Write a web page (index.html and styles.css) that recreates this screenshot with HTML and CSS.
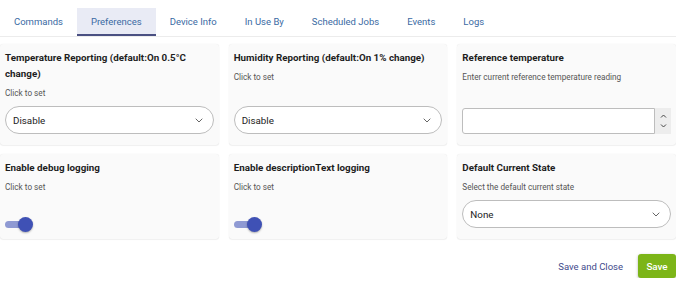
FILE: index.html
```html
<!DOCTYPE html>
<html lang="en">
<head>
  <meta charset="UTF-8" />
  <title>Device Preferences</title>
  <link rel="stylesheet" href="styles.css">
</head>
<body>

  <div class="tabs">
    <div class="tab">Commands</div>
    <div class="tab active">Preferences</div>
    <div class="tab">Device Info</div>
    <div class="tab">In Use By</div>
    <div class="tab">Scheduled Jobs</div>
    <div class="tab">Events</div>
    <div class="tab">Logs</div>
  </div>

  <div class="prefs">
    <div class="card">
      <div class="title">Temperature Reporting (default:On 0.5°C change)</div>
      <div class="desc">Click to set</div>
      <div class="select">
        <span>Disable</span>
        <svg class="chev" width="8" height="5" viewBox="0 0 8 5"><path d="M0.7 0.7l3.3 3.3 3.3-3.3" fill="none" stroke="#666" stroke-width="1"/></svg>
      </div>
    </div>

    <div class="card">
      <div class="title">Humidity Reporting (default:On 1% change)</div>
      <div class="desc">Click to set</div>
      <div class="select">
        <span>Disable</span>
        <svg class="chev" width="8" height="5" viewBox="0 0 8 5"><path d="M0.7 0.7l3.3 3.3 3.3-3.3" fill="none" stroke="#666" stroke-width="1"/></svg>
      </div>
    </div>

    <div class="card">
      <div class="title">Reference temperature</div>
      <div class="desc">Enter current reference temperature reading</div>
      <div class="number">
        <div class="number-field"></div>
        <div class="spinner">
          <svg width="7" height="4" viewBox="0 0 7 4"><path d="M1 3.5l2.5-2.5 2.5 2.5" fill="none" stroke="#444" stroke-width="1"/></svg>
          <svg width="7" height="4" viewBox="0 0 7 4"><path d="M1 0.5l2.5 2.5 2.5-2.5" fill="none" stroke="#444" stroke-width="1"/></svg>
        </div>
      </div>
    </div>

    <div class="card">
      <div class="title">Enable debug logging</div>
      <div class="desc">Click to set</div>
      <div class="switch"><div class="track"></div><div class="thumb"></div></div>
    </div>

    <div class="card">
      <div class="title">Enable descriptionText logging</div>
      <div class="desc">Click to set</div>
      <div class="switch"><div class="track"></div><div class="thumb"></div></div>
    </div>

    <div class="card">
      <div class="title">Default Current State</div>
      <div class="desc">Select the default current state</div>
      <div class="select">
        <span>None</span>
        <svg class="chev" width="8" height="5" viewBox="0 0 8 5"><path d="M0.7 0.7l3.3 3.3 3.3-3.3" fill="none" stroke="#666" stroke-width="1"/></svg>
      </div>
    </div>
  </div>

  <div class="actions">
    <a class="link-btn">Save and Close</a>
    <button class="save-btn">Save</button>
  </div>

</body>
</html>
```

FILE: styles.css
```css
body {
  font-family: Roboto, "Liberation Sans", sans-serif;
  background: #ffffff;
  color: #222;
  margin: 0;
  padding: 0;
  width: 676px;
}

.tabs {
  display: flex;
  margin-top: 8px;
  border-bottom: 1px solid #ececec;
}

.tab {
  height: 26px;
  line-height: 28px;
  padding: 0 14px;
  font-size: 9.5px;
  color: #3a6aa3;
  border-bottom: 2px solid transparent;
}

.tab.active {
  background: #e9ebf5;
  border-bottom-color: #4a5082;
}

.prefs {
  display: grid;
  grid-template-columns: repeat(3, 1fr);
  gap: 9px 10px;
  margin-top: 7px;
}

.card {
  display: flex;
  flex-direction: column;
  background: #fafafa;
  border-radius: 3px;
  box-shadow: 0 0 1px rgba(0, 0, 0, 0.12), 0 1px 1px rgba(0, 0, 0, 0.05);
  padding: 6px 5px 7px;
}

.title {
  font-size: 9.8px;
  font-weight: bold;
  line-height: 16px;
  color: #1e1e1e;
}

.desc {
  font-size: 8.2px;
  line-height: 14px;
  color: #555;
  margin-top: 4px;
}

.select {
  margin-top: auto;
  margin-bottom: 4px;
  height: 26px;
  border: 1px solid #bdbdbd;
  border-radius: 14px;
  background: #fff;
  display: flex;
  align-items: center;
  justify-content: space-between;
  padding: 0 10px 0 7px;
  font-size: 9.8px;
  color: #222;
}

.card .desc + .select {
  margin-top: 6px;
}

.card:nth-child(2) .select,
.card:nth-child(3) .number {
  margin-top: auto;
}

.number {
  margin-top: auto;
  margin-bottom: 4px;
  height: 26px;
  display: flex;
}

.number-field {
  flex: 1;
  border: 1px solid #bdbdbd;
  border-radius: 3px 0 0 3px;
  background: #fff;
}

.spinner {
  width: 16px;
  background: #ededed;
  display: flex;
  flex-direction: column;
  align-items: center;
  justify-content: center;
  gap: 6px;
}

.switch {
  margin-top: auto;
  position: relative;
  width: 30px;
  height: 15px;
}

.switch .track {
  position: absolute;
  left: 0;
  top: 4px;
  width: 24px;
  height: 7px;
  border-radius: 4px;
  background: #8f9ad3;
}

.switch .thumb {
  position: absolute;
  left: 13px;
  top: 0;
  width: 15px;
  height: 15px;
  border-radius: 50%;
  background: #3f51b5;
  box-shadow: 0 1px 2px rgba(0, 0, 0, 0.3);
}

.actions {
  display: flex;
  justify-content: flex-end;
  align-items: center;
  gap: 15px;
  margin-top: 15px;
}

.link-btn {
  font-size: 9.5px;
  color: #3f4a8c;
}

.save-btn {
  width: 38px;
  height: 24px;
  border: none;
  border-radius: 3px;
  background: #7cb518;
  color: #fff;
  font-family: Roboto, "Liberation Sans", sans-serif;
  font-size: 9.8px;
  font-weight: 500;
  padding: 0;
  box-shadow: 0 1px 3px rgba(0, 0, 0, 0.3);
}
```
